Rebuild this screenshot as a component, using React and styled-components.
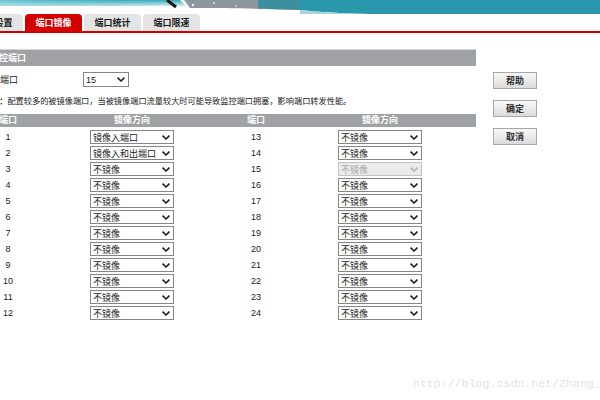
import styled, { createGlobalStyle } from "styled-components";

const GlobalStyle = createGlobalStyle`
  html, body {
    margin: 0;
    padding: 0;
    background: #ffffff;
  }
  body {
    font-family: "Liberation Sans", "Noto Sans CJK SC", sans-serif;
    color: #222;
  }
`;

const Page = styled.div`
  position: relative;
  width: 600px;
  height: 400px;
  overflow: hidden;
  background: #fff;
`;

const Banner = styled.svg`
  display: block;
  width: 600px;
  height: 14px;
`;

const TabBar = styled.div`
  display: flex;
  gap: 2px;
  margin-left: -34px;
  width: 634px;
  height: 17px;
  border-bottom: 2px solid #d40000;
`;

const Tab = styled.div`
  width: 57px;
  height: 17px;
  border-radius: 4px 4px 0 0;
  background: ${(p) => (p.active ? "#d40000" : "#e4e4e4")};
  color: ${(p) => (p.active ? "#fff" : "#1a1a1a")};
  font-size: 9px;
  font-weight: 700;
  display: flex;
  align-items: center;
  justify-content: center;
`;

const Main = styled.div`
  display: flex;
  margin-top: 16px;
`;

const Content = styled.div`
  margin-left: -20px;
  width: 496px;
`;

const SectionBar = styled.div`
  height: 16px;
  border-top: 1px solid #d4d6d8;
  background: #9ea2a5;
  color: #fff;
  font-size: 9px;
  font-weight: 700;
  line-height: 16px;
  padding-left: 10px;
`;

const MonitorRow = styled.div`
  display: flex;
  align-items: center;
  margin-top: 6px;
  height: 15px;
`;

const Label = styled.div`
  width: 101px;
  padding-left: 2px;
  font-size: 9px;
`;

const Note = styled.div`
  margin-top: 9px;
  height: 12px;
  line-height: 12px;
  padding-left: 11px;
  font-size: 8.2px;
  color: #1a1a1a;
  white-space: nowrap;
  b {
    font-weight: 700;
  }
`;

const TableHead = styled.div`
  display: grid;
  grid-template-columns: 56px 192px 56px 192px;
  margin-top: 6px;
  height: 13px;
  background: #9ea2a5;
  color: #fff;
  font-size: 9px;
  font-weight: 700;
  line-height: 13px;
  text-align: center;
`;

const Rows = styled.div`
  margin-top: 2px;
`;

const Row = styled.div`
  display: grid;
  grid-template-columns: 56px 192px 56px 192px;
  align-items: center;
  height: 16px;
`;

const PortNum = styled.div`
  text-align: center;
  font-size: 9px;
  color: #222;
`;

const Dropdown = styled.div`
  box-sizing: border-box;
  justify-self: ${(p) => (p.center ? "center" : "start")};
  width: ${(p) => p.w}px;
  height: ${(p) => p.h}px;
  display: flex;
  align-items: center;
  justify-content: space-between;
  padding: 0 3px 0 2px;
  border: 1px solid ${(p) => (p.disabled ? "#c4c4c4" : "#858585")};
  background: ${(p) => (p.disabled ? "#ebebeb" : "#fff")};
  color: ${(p) => (p.disabled ? "#a8a8a8" : "#222")};
  font-size: 9px;
  white-space: nowrap;
`;

const Side = styled.div`
  display: flex;
  flex-direction: column;
  gap: 11px;
  margin-left: 17px;
  padding-top: 23px;
`;

const Button = styled.div`
  box-sizing: border-box;
  width: 44px;
  height: 17px;
  border: 1px solid #a8a8a8;
  background: linear-gradient(#f8f8f8, #dcdcdc);
  color: #333;
  font-size: 9px;
  font-weight: 700;
  display: flex;
  align-items: center;
  justify-content: center;
`;

const Watermark = styled.div`
  position: absolute;
  left: 413px;
  top: 377px;
  font-family: "Liberation Mono", monospace;
  font-size: 11.6px;
  color: #e6e2dd;
  white-space: nowrap;
`;

const Chevron = ({ disabled }) => (
  <svg width="8" height="5" viewBox="0 0 8 5">
    <polyline
      points="0.6,0.6 4,4 7.4,0.6"
      fill="none"
      stroke={disabled ? "#b0b0b0" : "#1a1a1a"}
      strokeWidth="1.5"
    />
  </svg>
);

const Select = ({ value, w, h, disabled, center }) => (
  <Dropdown w={w} h={h} disabled={disabled} center={center}>
    <span>{value}</span>
    <Chevron disabled={disabled} />
  </Dropdown>
);

const left = [1, 2, 3, 4, 5, 6, 7, 8, 9, 10, 11, 12];
const modeOf = (n) =>
  n === 1 ? "镜像入端口" : n === 2 ? "镜像入和出端口" : "不镜像";

const App = () => {
  return (
    <Page>
      <GlobalStyle />
      <Banner viewBox="0 0 600 14">
        <defs>
          <linearGradient id="lc" x1="0" y1="0" x2="0" y2="1">
            <stop offset="0" stopColor="#36a9bb" />
            <stop offset="1" stopColor="#d6f1f3" />
          </linearGradient>
          <linearGradient id="lh" x1="0" y1="0" x2="1" y2="0">
            <stop offset="0" stopColor="#8fd6de" stopOpacity="0.6" />
            <stop offset="1" stopColor="#2aa2b4" stopOpacity="0" />
          </linearGradient>
        </defs>
        <path d="M0,0 H180 L186,6 H0 Z" fill="url(#lc)" />
        <path d="M0,0 H180 L186,6 H0 Z" fill="url(#lh)" />
        <path d="M184,0 H300 V10 C270,9 240,8 190,8 Z" fill="#8d979e" />
        <circle cx="193" cy="5" r="1.2" fill="#f2f2f2" />
        <circle cx="214" cy="3" r="1" fill="#d8dde0" />
        <circle cx="236" cy="6" r="1" fill="#c8ced2" />
        <path d="M258,0 H300 V10 C285,9.6 270,9 258,8.8 Z" fill="#3d8fa0" />
        <path d="M167,0 L176,7" stroke="#151515" strokeWidth="3" />
        <path d="M300,0 H600 V14 H370 C340,13.6 320,12 300,10 Z" fill="#2b97ad" />
        <path d="M300,10 C320,12 340,13.6 370,14 H600 V14.5 H300 Z" fill="#a8d6de" />
      </Banner>
      <TabBar>
        <Tab>系统设置</Tab>
        <Tab active>端口镜像</Tab>
        <Tab>端口统计</Tab>
        <Tab>端口限速</Tab>
      </TabBar>
      <Main>
        <Content>
          <SectionBar>监控端口</SectionBar>
          <MonitorRow>
            <Label>监控端口</Label>
            <Select value="15" w={46} h={15} />
          </MonitorRow>
          <Note>
            注<b>：</b>配置较多的被镜像端口，当被镜像端口流量较大时可能导致监控端口拥塞，影响端口转发性能。
          </Note>
          <TableHead>
            <div>端口</div>
            <div>镜像方向</div>
            <div>端口</div>
            <div>镜像方向</div>
          </TableHead>
          <Rows>
            {left.map((n) => (
              <Row key={n}>
                <PortNum>{n}</PortNum>
                <Select value={modeOf(n)} w={84} h={14} center />
                <PortNum>{n + 12}</PortNum>
                <Select value="不镜像" w={84} h={14} center disabled={n + 12 === 15} />
              </Row>
            ))}
          </Rows>
        </Content>
        <Side>
          <Button>帮助</Button>
          <Button>确定</Button>
          <Button>取消</Button>
        </Side>
      </Main>
      <Watermark>http://blog.csdn.net/Zhang_</Watermark>
    </Page>
  );
};

export default App;
